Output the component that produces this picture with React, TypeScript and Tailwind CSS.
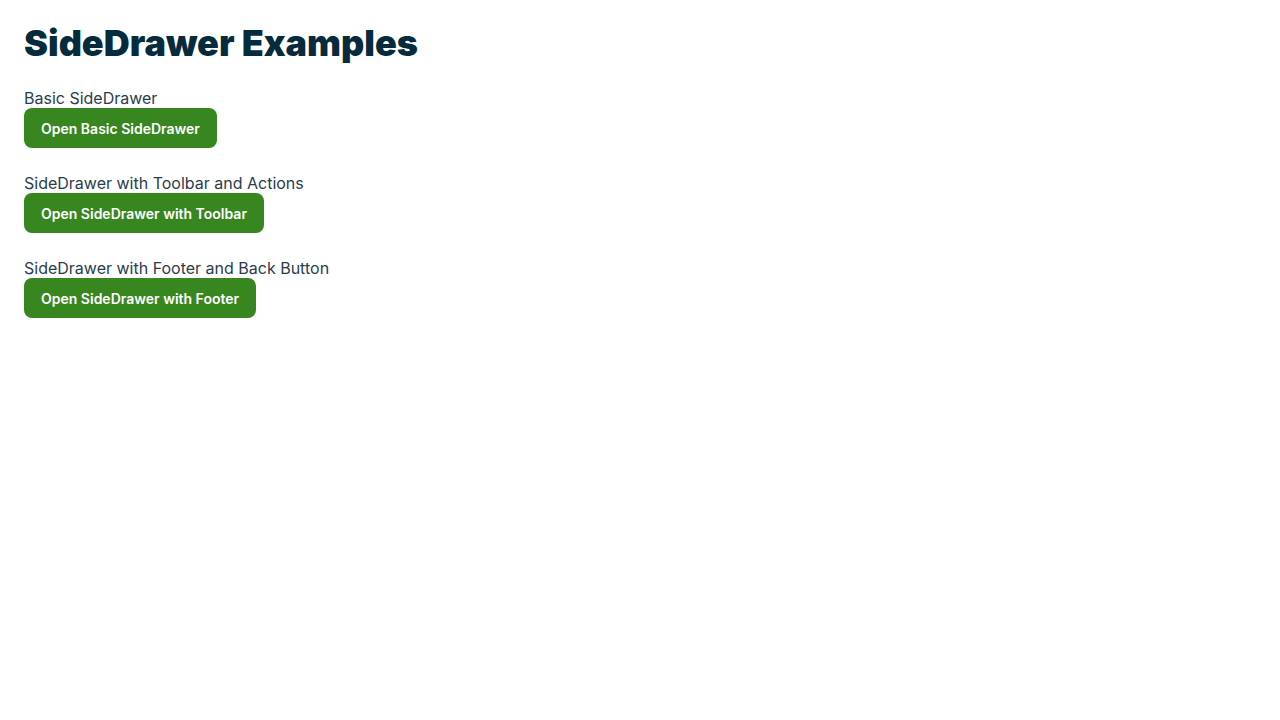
const examples = [
  { label: 'Basic SideDrawer', button: 'Open Basic SideDrawer' },
  { label: 'SideDrawer with Toolbar and Actions', button: 'Open SideDrawer with Toolbar' },
  { label: 'SideDrawer with Footer and Back Button', button: 'Open SideDrawer with Footer' },
];

const App = () => {
  return (
    <div className="min-h-screen bg-white px-6 pt-[23px] font-['Inter',sans-serif]">
      <h1 className="text-[36px] leading-[40px] font-black text-[#062b3c] mb-[25px]">
        SideDrawer Examples
      </h1>

      {/* Ejemplos */}
      <div className="flex flex-col gap-[25px]">
        {examples.map((ex) => (
          <div key={ex.label} className="flex flex-col items-start">
            <p className="text-base leading-5 text-[#2a3d4c]">{ex.label}</p>
            <button
              type="button"
              className="h-10 px-[17px] pt-px rounded-lg bg-[#38861f] text-sm font-semibold text-white hover:bg-[#2f741a] transition-colors"
            >
              {ex.button}
            </button>
          </div>
        ))}
      </div>
    </div>
  );
};

export default App;
